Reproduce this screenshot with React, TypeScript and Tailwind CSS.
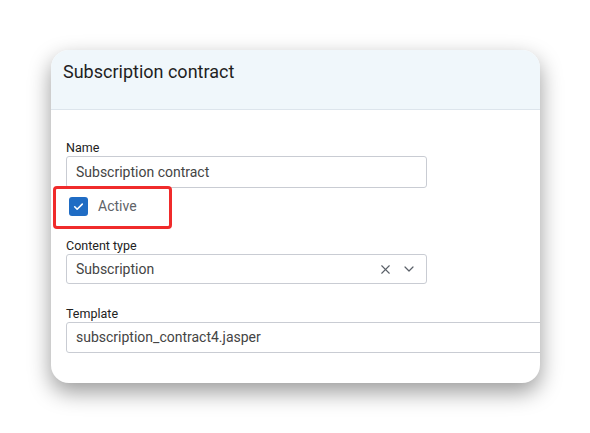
import { ChevronDown, X } from "lucide-react";

export default function App() {
  return (
    <div
      className="w-[590px] h-[433px] bg-white pl-[51px] pt-[50px] overflow-hidden"
      style={{ fontFamily: "Roboto, 'Liberation Sans', sans-serif" }}
    >
      <div className="w-[489px] h-[333px] bg-white rounded-[18px] overflow-hidden shadow-[0_9px_22px_rgba(0,0,0,0.4)]">
        {/* header */}
        <div className="h-[60px] bg-[#f0f7fb] border-b border-[#dde5ec] px-3 pt-[10px]">
          <h1 className="text-[18px] leading-6 text-[#1f1f1f]">Subscription contract</h1>
        </div>

        {/* form */}
        <div className="pl-[15px] pt-[30px]">
          <Label text="Name" />
          <div className="w-[361px] h-[32px] border border-[#c9ccd3] rounded-[3px] flex items-center px-[9px] text-[14px] text-[#444]">
            Subscription contract
          </div>

          <div className="relative mt-[9px] mb-[22px] h-[19px] flex items-center gap-[10px] ml-[3px]">
            <div className="absolute left-[-16px] top-[-11px] w-[119px] h-[43px] border-[3px] border-[#f02b2b] rounded-[4px]" />
            <div className="w-[19px] h-[19px] rounded-[3px] bg-[#1f6cc4] flex items-center justify-center">
              <svg width="13" height="13" viewBox="0 0 24 24" fill="none" stroke="white" strokeWidth="3" strokeLinecap="round" strokeLinejoin="round">
                <path d="M5 12.5l4.5 4.5L19 7.5" />
              </svg>
            </div>
            <span className="text-[14px] text-[#5f6368]">Active</span>
          </div>

          <Label text="Content type" />
          <div className="w-[361px] h-[30px] border border-[#c9ccd3] rounded-[3px] flex items-center pl-[9px] pr-[9px] text-[14px] text-[#444]">
            <span className="flex-1">Subscription</span>
            <X size={15} strokeWidth={1.8} className="text-[#5a6068] mr-[8px]" />
            <ChevronDown size={16} strokeWidth={1.8} className="text-[#5a6068]" />
          </div>

          <div className="mt-[22px]">
            <Label text="Template" />
            <div className="w-[500px] h-[31px] border border-[#c9ccd3] rounded-[3px] flex items-center px-[9px] text-[14px] text-[#444]">
              subscription_contract4.jasper
            </div>
          </div>
        </div>
      </div>
    </div>
  );
}

function Label({ text }: { text: string }) {
  return <div className="h-[16px] text-[12.5px] leading-4 text-[#222]">{text}</div>;
}
